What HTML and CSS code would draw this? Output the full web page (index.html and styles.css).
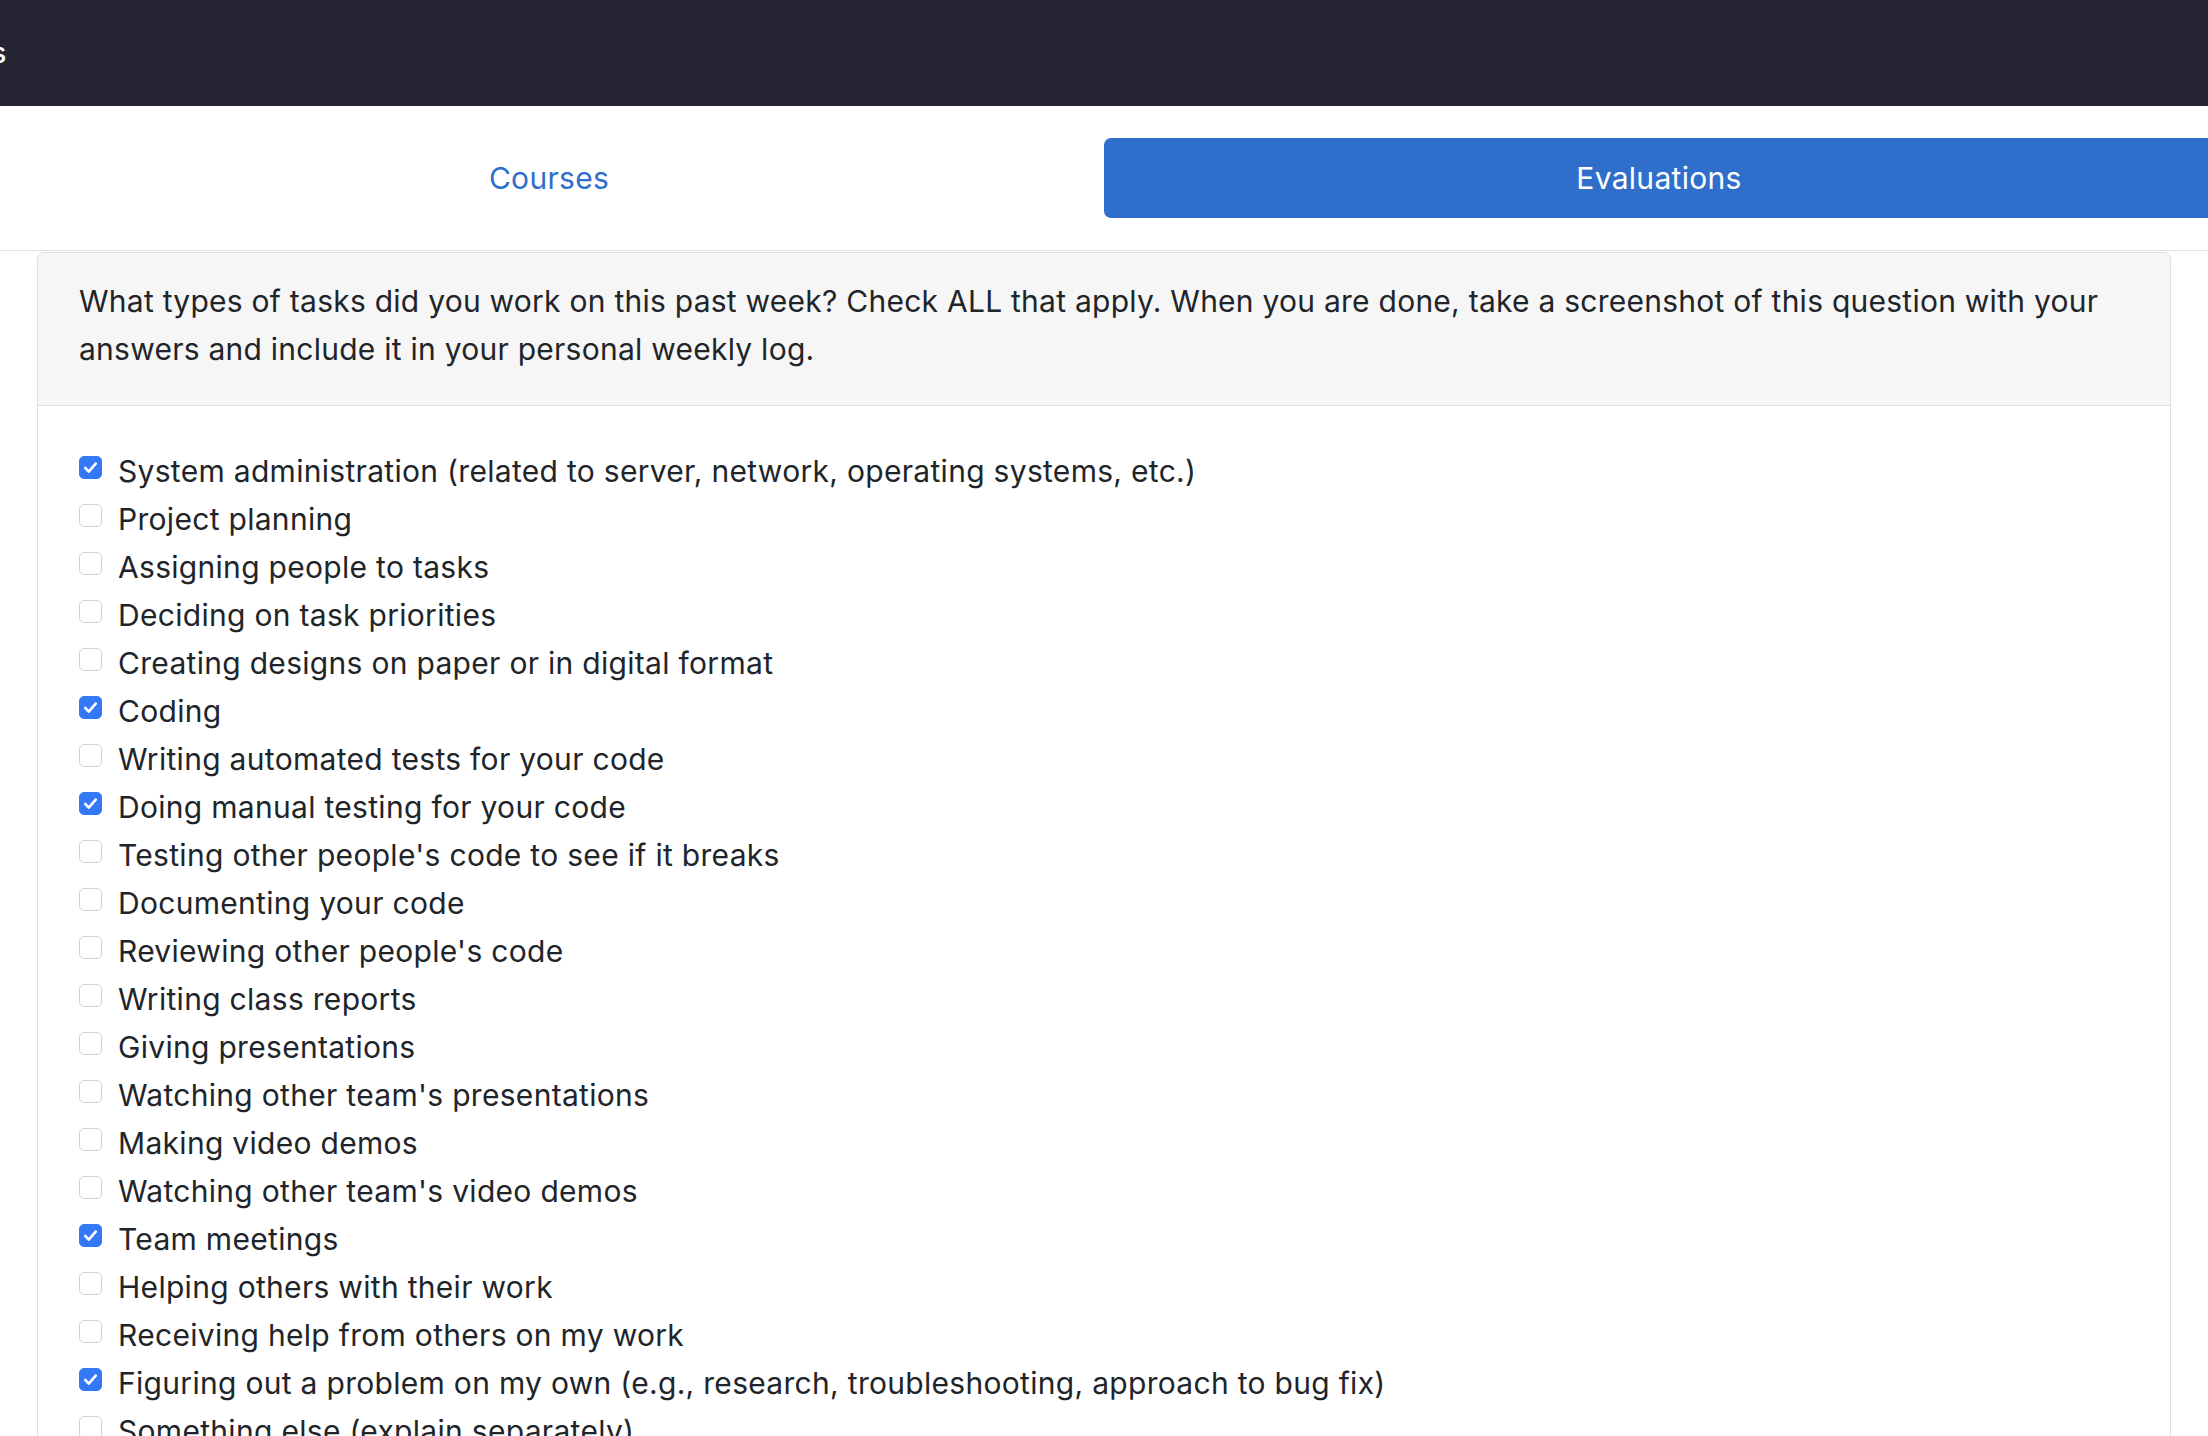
FILE: index.html
```html
<!DOCTYPE html>
<html lang="en">
<head>
<meta charset="utf-8">
<title>Evaluations</title>
<link rel="stylesheet" href="styles.css">
</head>
<body>
<header class="navbar">
  <span class="brand">Weekly Logs</span>
</header>
<nav class="tabs">
  <a class="tab" href="#">Courses</a>
  <a class="tab active" href="#">Evaluations</a>
</nav>
<main class="card">
  <div class="card-header">
    <p>What types of tasks did you work on this past week? Check ALL that apply. When you are done, take a screenshot of this question with your answers and include it in your personal weekly log.</p>
  </div>
  <div class="card-body">
    <ul class="options">
      <li><span class="box checked"><svg viewBox="0 0 24 24"><path d="M6 12.5l4 4.2L18 7.5"/></svg></span>System administration (related to server, network, operating systems, etc.)</li>
      <li><span class="box"></span>Project planning</li>
      <li><span class="box"></span>Assigning people to tasks</li>
      <li><span class="box"></span>Deciding on task priorities</li>
      <li><span class="box"></span>Creating designs on paper or in digital format</li>
      <li><span class="box checked"><svg viewBox="0 0 24 24"><path d="M6 12.5l4 4.2L18 7.5"/></svg></span>Coding</li>
      <li><span class="box"></span>Writing automated tests for your code</li>
      <li><span class="box checked"><svg viewBox="0 0 24 24"><path d="M6 12.5l4 4.2L18 7.5"/></svg></span>Doing manual testing for your code</li>
      <li><span class="box"></span>Testing other people's code to see if it breaks</li>
      <li><span class="box"></span>Documenting your code</li>
      <li><span class="box"></span>Reviewing other people's code</li>
      <li><span class="box"></span>Writing class reports</li>
      <li><span class="box"></span>Giving presentations</li>
      <li><span class="box"></span>Watching other team's presentations</li>
      <li><span class="box"></span>Making video demos</li>
      <li><span class="box"></span>Watching other team's video demos</li>
      <li><span class="box checked"><svg viewBox="0 0 24 24"><path d="M6 12.5l4 4.2L18 7.5"/></svg></span>Team meetings</li>
      <li><span class="box"></span>Helping others with their work</li>
      <li><span class="box"></span>Receiving help from others on my work</li>
      <li><span class="box checked"><svg viewBox="0 0 24 24"><path d="M6 12.5l4 4.2L18 7.5"/></svg></span>Figuring out a problem on my own (e.g., research, troubleshooting, approach to bug fix)</li>
      <li><span class="box"></span>Something else (explain separately)</li>
    </ul>
  </div>
</main>
</body>
</html>
```
FILE: styles.css
```css
html, body {
  margin: 0;
  padding: 0;
}
body {
  width: 2208px;
  height: 1436px;
  overflow: hidden;
  background: #ffffff;
  font-family: Inter, "Noto Sans", sans-serif;
  color: #212529;
}
.navbar {
  height: 106px;
  background: #242433;
  display: flex;
  align-items: center;
  overflow: hidden;
}
.brand {
  color: #ffffff;
  font-size: 28px;
  font-weight: 500;
  margin-left: -165px;
  white-space: nowrap;
}
.tabs {
  display: flex;
  gap: 6px;
  padding: 32px 0 32px 0;
  border-bottom: 1px solid #dee2e6;
  overflow: hidden;
}
.tab {
  flex: none;
  height: 80px;
  display: flex;
  align-items: center;
  justify-content: center;
  font-size: 30px;
  letter-spacing: 0.3px;
  color: #306ecb;
  text-decoration: none;
  border-radius: 7px;
}
.tab:first-child {
  width: 1098px;
}
.tab.active {
  width: 1110px;
  background: #306ecb;
  color: #ffffff;
}
.card {
  display: block;
  margin: 1px 37px 0;
  border: 1px solid #dfdfdf;
  border-radius: 7px;
}
.card-header {
  background: #f6f6f6;
  border-bottom: 1px solid #dfdfdf;
  border-radius: 7px 7px 0 0;
  padding: 24px 41px 32px;
}
.card-header p {
  margin: 0;
  font-size: 30px;
  line-height: 48px;
  letter-spacing: 0.25px;
}
.card-body {
  padding: 41px 41px 0;
}
.options {
  list-style: none;
  margin: 0;
  padding: 0;
}
.options li {
  display: flex;
  align-items: center;
  height: 48px;
  font-size: 30px;
  letter-spacing: 0.3px;
  white-space: nowrap;
}
.box {
  flex: none;
  width: 23px;
  height: 23px;
  margin-right: 16px;
  border: 1px solid #d2d2d2;
  border-radius: 5px;
  background: #ffffff;
  box-sizing: border-box;
  position: relative;
  top: -4px;
  display: flex;
  align-items: center;
  justify-content: center;
}
.box.checked {
  background: #3478f6;
  border-color: #3478f6;
}
.box svg {
  width: 21px;
  height: 21px;
  fill: none;
  stroke: #ffffff;
  stroke-width: 3;
  stroke-linecap: round;
  stroke-linejoin: round;
}
```
